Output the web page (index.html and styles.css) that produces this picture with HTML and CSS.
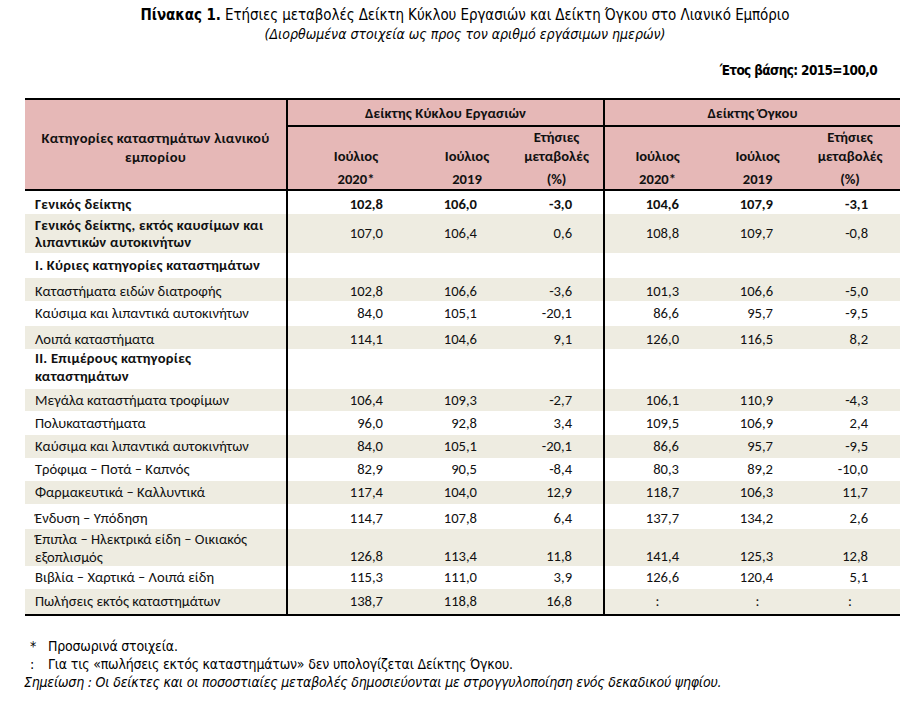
FILE: index.html
```html
<!DOCTYPE html>
<html lang="el">
<head>
<meta charset="utf-8">
<title>Πίνακας 1</title>
<link rel="stylesheet" href="styles.css">
</head>
<body>
<div class="page">
  <div class="title"><b>Πίνακας 1.</b> Ετήσιες μεταβολές Δείκτη Κύκλου Εργασιών και Δείκτη Όγκου στο Λιανικό Εμπόριο</div>
  <div class="subtitle">(Διορθωμένα στοιχεία ως προς τον αριθμό εργάσιμων ημερών)</div>
  <div class="base">Έτος βάσης: 2015=100,0</div>

  <table class="t">
    <colgroup>
      <col class="w0"><col class="w1"><col class="w2"><col class="w3"><col class="w4"><col class="w5"><col class="w6">
    </colgroup>
    <thead>
      <tr class="h1">
        <th rowspan="2" class="cat">Κατηγορίες καταστημάτων λιανικού<br>εμπορίου</th>
        <th colspan="3" class="grp sep">Δείκτης Κύκλου Εργασιών</th>
        <th colspan="3" class="grp sep">Δείκτης Όγκου</th>
      </tr>
      <tr class="h2">
        <th class="sub sep"><span class="ln"></span><span class="ln">Ιούλιος</span><span class="ln l3">2020*</span></th>
        <th class="sub"><span class="ln"></span><span class="ln">Ιούλιος</span><span class="ln l3">2019</span></th>
        <th class="sub"><span class="ln">Ετήσιες</span><span class="ln">μεταβολές</span><span class="ln l3">(%)</span></th>
        <th class="sub sep"><span class="ln"></span><span class="ln">Ιούλιος</span><span class="ln l3">2020*</span></th>
        <th class="sub"><span class="ln"></span><span class="ln">Ιούλιος</span><span class="ln l3">2019</span></th>
        <th class="sub last"><span class="ln">Ετήσιες</span><span class="ln">μεταβολές</span><span class="ln l3">(%)</span></th>
      </tr>
    </thead>
    <tbody>
      <tr class="r24 bold low">
        <td class="lbl b">Γενικός δείκτης</td>
        <td class="n1 sep">102,8</td><td class="n2">106,0</td><td class="n3">-3,0</td>
        <td class="n4 sep">104,6</td><td class="n5">107,9</td><td class="n6">-3,1</td>
      </tr>
      <tr class="r39 alt">
        <td class="lbl b">Γενικός δείκτης, εκτός καυσίμων και<br>λιπαντικών αυτοκινήτων</td>
        <td class="n1 sep">107,0</td><td class="n2">106,4</td><td class="n3">0,6</td>
        <td class="n4 sep">108,8</td><td class="n5">109,7</td><td class="n6">-0,8</td>
      </tr>
      <tr class="r25">
        <td class="lbl b">I. Κύριες κατηγορίες καταστημάτων</td>
        <td class="sep"></td><td></td><td></td><td class="sep"></td><td></td><td></td>
      </tr>
      <tr class="r23 alt low">
        <td class="lbl">Καταστήματα ειδών διατροφής</td>
        <td class="n1 sep">102,8</td><td class="n2">106,6</td><td class="n3">-3,6</td>
        <td class="n4 sep">101,3</td><td class="n5">106,6</td><td class="n6">-5,0</td>
      </tr>
      <tr class="r25">
        <td class="lbl">Καύσιμα και λιπαντικά αυτοκινήτων</td>
        <td class="n1 sep">84,0</td><td class="n2">105,1</td><td class="n3">-20,1</td>
        <td class="n4 sep">86,6</td><td class="n5">95,7</td><td class="n6">-9,5</td>
      </tr>
      <tr class="r23 alt low">
        <td class="lbl">Λοιπά καταστήματα</td>
        <td class="n1 sep">114,1</td><td class="n2">104,6</td><td class="n3">9,1</td>
        <td class="n4 sep">126,0</td><td class="n5">116,5</td><td class="n6">8,2</td>
      </tr>
      <tr class="r39">
        <td class="lbl b dbl up">II. Επιμέρους κατηγορίες<br>καταστημάτων</td>
        <td class="sep"></td><td></td><td></td><td class="sep"></td><td></td><td></td>
      </tr>
      <tr class="r22 alt">
        <td class="lbl">Μεγάλα καταστήματα τροφίμων</td>
        <td class="n1 sep">106,4</td><td class="n2">109,3</td><td class="n3">-2,7</td>
        <td class="n4 sep">106,1</td><td class="n5">110,9</td><td class="n6">-4,3</td>
      </tr>
      <tr class="r24">
        <td class="lbl">Πολυκαταστήματα</td>
        <td class="n1 sep">96,0</td><td class="n2">92,8</td><td class="n3">3,4</td>
        <td class="n4 sep">109,5</td><td class="n5">106,9</td><td class="n6">2,4</td>
      </tr>
      <tr class="r23 alt">
        <td class="lbl">Καύσιμα και λιπαντικά αυτοκινήτων</td>
        <td class="n1 sep">84,0</td><td class="n2">105,1</td><td class="n3">-20,1</td>
        <td class="n4 sep">86,6</td><td class="n5">95,7</td><td class="n6">-9,5</td>
      </tr>
      <tr class="r23">
        <td class="lbl">Τρόφιμα – Ποτά – Καπνός</td>
        <td class="n1 sep">82,9</td><td class="n2">90,5</td><td class="n3">-8,4</td>
        <td class="n4 sep">80,3</td><td class="n5">89,2</td><td class="n6">-10,0</td>
      </tr>
      <tr class="r23 alt">
        <td class="lbl">Φαρμακευτικά – Καλλυντικά</td>
        <td class="n1 sep">117,4</td><td class="n2">104,0</td><td class="n3">12,9</td>
        <td class="n4 sep">118,7</td><td class="n5">106,3</td><td class="n6">11,7</td>
      </tr>
      <tr class="r25 low">
        <td class="lbl">Ένδυση – Υπόδηση</td>
        <td class="n1 sep">114,7</td><td class="n2">107,8</td><td class="n3">6,4</td>
        <td class="n4 sep">137,7</td><td class="n5">134,2</td><td class="n6">2,6</td>
      </tr>
      <tr class="r37 alt bot">
        <td class="lbl dbl">Έπιπλα – Ηλεκτρικά είδη – Οικιακός<br>εξοπλισμός</td>
        <td class="n1 sep">126,8</td><td class="n2">113,4</td><td class="n3">11,8</td>
        <td class="n4 sep">141,4</td><td class="n5">125,3</td><td class="n6">12,8</td>
      </tr>
      <tr class="r23">
        <td class="lbl">Βιβλία – Χαρτικά – Λοιπά είδη</td>
        <td class="n1 sep">115,3</td><td class="n2">111,0</td><td class="n3">3,9</td>
        <td class="n4 sep">126,6</td><td class="n5">120,4</td><td class="n6">5,1</td>
      </tr>
      <tr class="r26 alt">
        <td class="lbl">Πωλήσεις εκτός καταστημάτων</td>
        <td class="n1 sep">138,7</td><td class="n2">118,8</td><td class="n3">16,8</td>
        <td class="c sep">:</td><td class="c">:</td><td class="c cl">:</td>
      </tr>
    </tbody>
  </table>

  <div class="notes">
    <div class="note"><span class="mark">*</span><span>Προσωρινά στοιχεία.</span></div>
    <div class="note"><span class="mark">:</span><span>Για τις «πωλήσεις εκτός καταστημάτων» δεν υπολογίζεται Δείκτης Όγκου.</span></div>
    <div class="note it">Σημείωση : Οι δείκτες και οι ποσοστιαίες μεταβολές δημοσιεύονται με στρογγυλοποίηση ενός δεκαδικού ψηφίου.</div>
  </div>
</div>
</body>
</html>
```

FILE: styles.css
```css
html, body {
  margin: 0;
  padding: 0;
  background: #ffffff;
  color: #000000;
}

.page {
  width: 880px;
  padding: 6px 0 0 25px;
}

.title, .subtitle, .base, .notes {
  font-family: "Liberation Sans Narrow", "Arial Narrow", "DejaVu Sans Condensed", sans-serif;
  font-stretch: condensed;
}

.title {
  text-align: center;
  font-size: 15px;
  line-height: 18px;
  letter-spacing: -0.08px;
}

.subtitle {
  text-align: center;
  font-size: 14px;
  line-height: 18px;
  font-style: italic;
  margin-top: 1px;
}

.base {
  text-align: right;
  padding-right: 28px;
  margin-top: 18px;
  font-size: 13.5px;
  line-height: 18px;
  font-weight: bold;
  letter-spacing: -0.65px;
}

.t {
  margin-top: 19px;
  width: 875px;
  table-layout: fixed;
  border-collapse: collapse;
  border-top: 2px solid #000;
  border-bottom: 2px solid #000;
  font-family: "Carlito", "Calibri", "Lato", "Open Sans", sans-serif;
  font-size: 14.6px;
  color: #111;
}

.w0 { width: 262px; }
.w1 { width: 137px; }
.w2 { width: 86px; }
.w3 { width: 94px; }
.w4 { width: 106px; }
.w5 { width: 95px; }
.w6 { width: 95px; }

th, td {
  padding: 0;
}

thead tr {
  background: #e6b8b7;
}

thead th {
  font-weight: bold;
}

.h1 { height: 27px; }
.h2 { height: 64px; }

.h2 th { border-bottom: 2px solid #000; }

.cat {
  vertical-align: top;
  text-align: center;
  padding-top: 29px;
  line-height: 19px;
  letter-spacing: 0.25px;
  border-bottom: 2px solid #000;
}

.grp {
  text-align: center;
  vertical-align: middle;
  border-bottom: 2px solid #000;
  letter-spacing: 0.15px;
}

.sep {
  border-left: 2px solid #000;
}

.sub {
  vertical-align: top;
  text-align: center;
  padding-top: 1px;
}

.sub.last {
  padding-right: 5px;
}

.ln {
  display: block;
  height: 19px;
  line-height: 19px;
}

.ln.l3 {
  margin-top: 5px;
  height: 17px;
  line-height: 17px;
}

tbody td {
  vertical-align: middle;
  line-height: 17px;
}

.r22 { height: 22px; }
.r23 { height: 23px; }
.r24 { height: 24px; }
.r25 { height: 25px; }
.r26 { height: 26px; }
.r37 { height: 37px; }
.r39 { height: 39px; }

.low td { padding-top: 3px; }

.dbl { line-height: 18px; }
.up { padding-bottom: 4px; }

.alt { background: #eeece1; }

.bold td { font-weight: bold; }

.b {
  font-weight: bold;
  letter-spacing: 0.25px;
}

.lbl {
  padding-left: 10px;
  text-align: left;
}

.bot td { vertical-align: bottom; padding-bottom: 1px; }
.bot td.lbl { vertical-align: middle; padding-bottom: 0; }

.n1, .n2, .n3, .n4, .n5, .n6 { text-align: right; }
.n1 { padding-right: 41px; }
.n2 { padding-right: 33px; }
.n3 { padding-right: 31px; }
.n4 { padding-right: 31px; }
.n5 { padding-right: 32px; }
.n6 { padding-right: 32px; }

.c { text-align: center; }
.cl { padding-right: 5px; }

.notes {
  margin-top: 21px;
  font-size: 14px;
  line-height: 18px;
  letter-spacing: -0.2px;
}

.note {
  display: flex;
}

.mark {
  width: 18px;
  padding-left: 5px;
  flex: none;
}

.it {
  font-style: italic;
  margin-left: -1px;
}
```
